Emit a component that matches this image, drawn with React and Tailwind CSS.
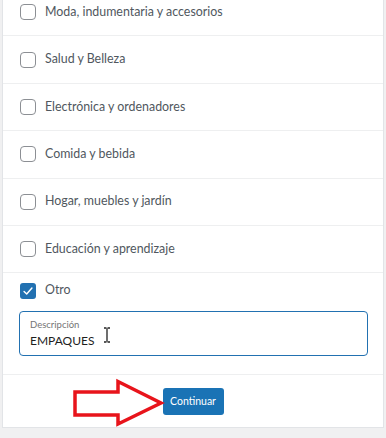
import React from 'react';

const options = [
  'Moda, indumentaria y accesorios',
  'Salud y Belleza',
  'Electrónica y ordenadores',
  'Comida y bebida',
  'Hogar, muebles y jardín',
  'Educación y aprendizaje',
];

const Box = ({ checked }) =>
  checked ? (
    <span className="flex h-[16px] w-[16px] shrink-0 items-center justify-center rounded-[3px] bg-[#2271b1]">
      <svg viewBox="0 0 16 16" className="h-[14px] w-[14px]" fill="none" stroke="white" strokeWidth="1.6" strokeLinecap="round" strokeLinejoin="round">
        <path d="M3.5 8.5l3 3 6-7" />
      </svg>
    </span>
  ) : (
    <span className="block h-[16px] w-[16px] shrink-0 rounded-[4px] border border-[#8c8f94] bg-white" />
  );

export default function App() {
  return (
    <div className="relative h-[438px] overflow-hidden bg-[#f0f0f1]" style={{ fontFamily: 'Lato, "Noto Sans", sans-serif' }}>
      <div className="ml-[2px] mt-[-12px] w-[382px] border border-[#e2e4e7] bg-white">
        {options.map((o) => (
          <div key={o} className="flex h-[47.4px] items-center gap-[9px] border-b border-[#eeeff0] pl-[17px]">
            <Box />
            <span className="text-[12.4px] text-[#50575e]">{o}</span>
          </div>
        ))}

        <div className="border-b border-[#eeeff0] px-[16px] pt-[8px] pb-[18px]">
          <div className="flex items-center gap-[9px] pl-[1px]">
            <Box checked />
            <span className="text-[12.4px] text-[#50575e]">Otro</span>
          </div>
          <div className="relative mt-[11px] h-[45px] w-[349px] rounded-[4px] border-[1.5px] border-[#2271b1] px-[10px] pt-[6px]">
            <div className="text-[9.5px] leading-[14px] text-[#757575]">Descripción</div>
            <div className="text-[12px] leading-[18px] text-[#1e1e1e]">EMPAQUES</div>
            <svg className="absolute left-[83px] top-[15px]" width="8" height="16" viewBox="0 0 8 16" fill="none" stroke="#222" strokeWidth="1.3">
              <path d="M1 1h2.5M4.5 1H7M4 1.5v13M1 15h2.5M4.5 15H7" />
            </svg>
          </div>
        </div>

        <div className="flex justify-center pt-[13px] pb-[12px]">
          <button className="h-[27px] w-[61px] rounded-[3px] bg-[#1a73b5] text-[10.5px] text-white">Continuar</button>
        </div>
      </div>

      <svg className="absolute left-[70px] top-[376px]" width="100" height="54" viewBox="70 376 100 54" fill="none">
        <polygon points="75,392 118,392 118,381.5 161,403 118,424 118,415 75,415" stroke="#e8141b" strokeWidth="3.5" strokeLinejoin="miter" />
      </svg>
    </div>
  );
}
